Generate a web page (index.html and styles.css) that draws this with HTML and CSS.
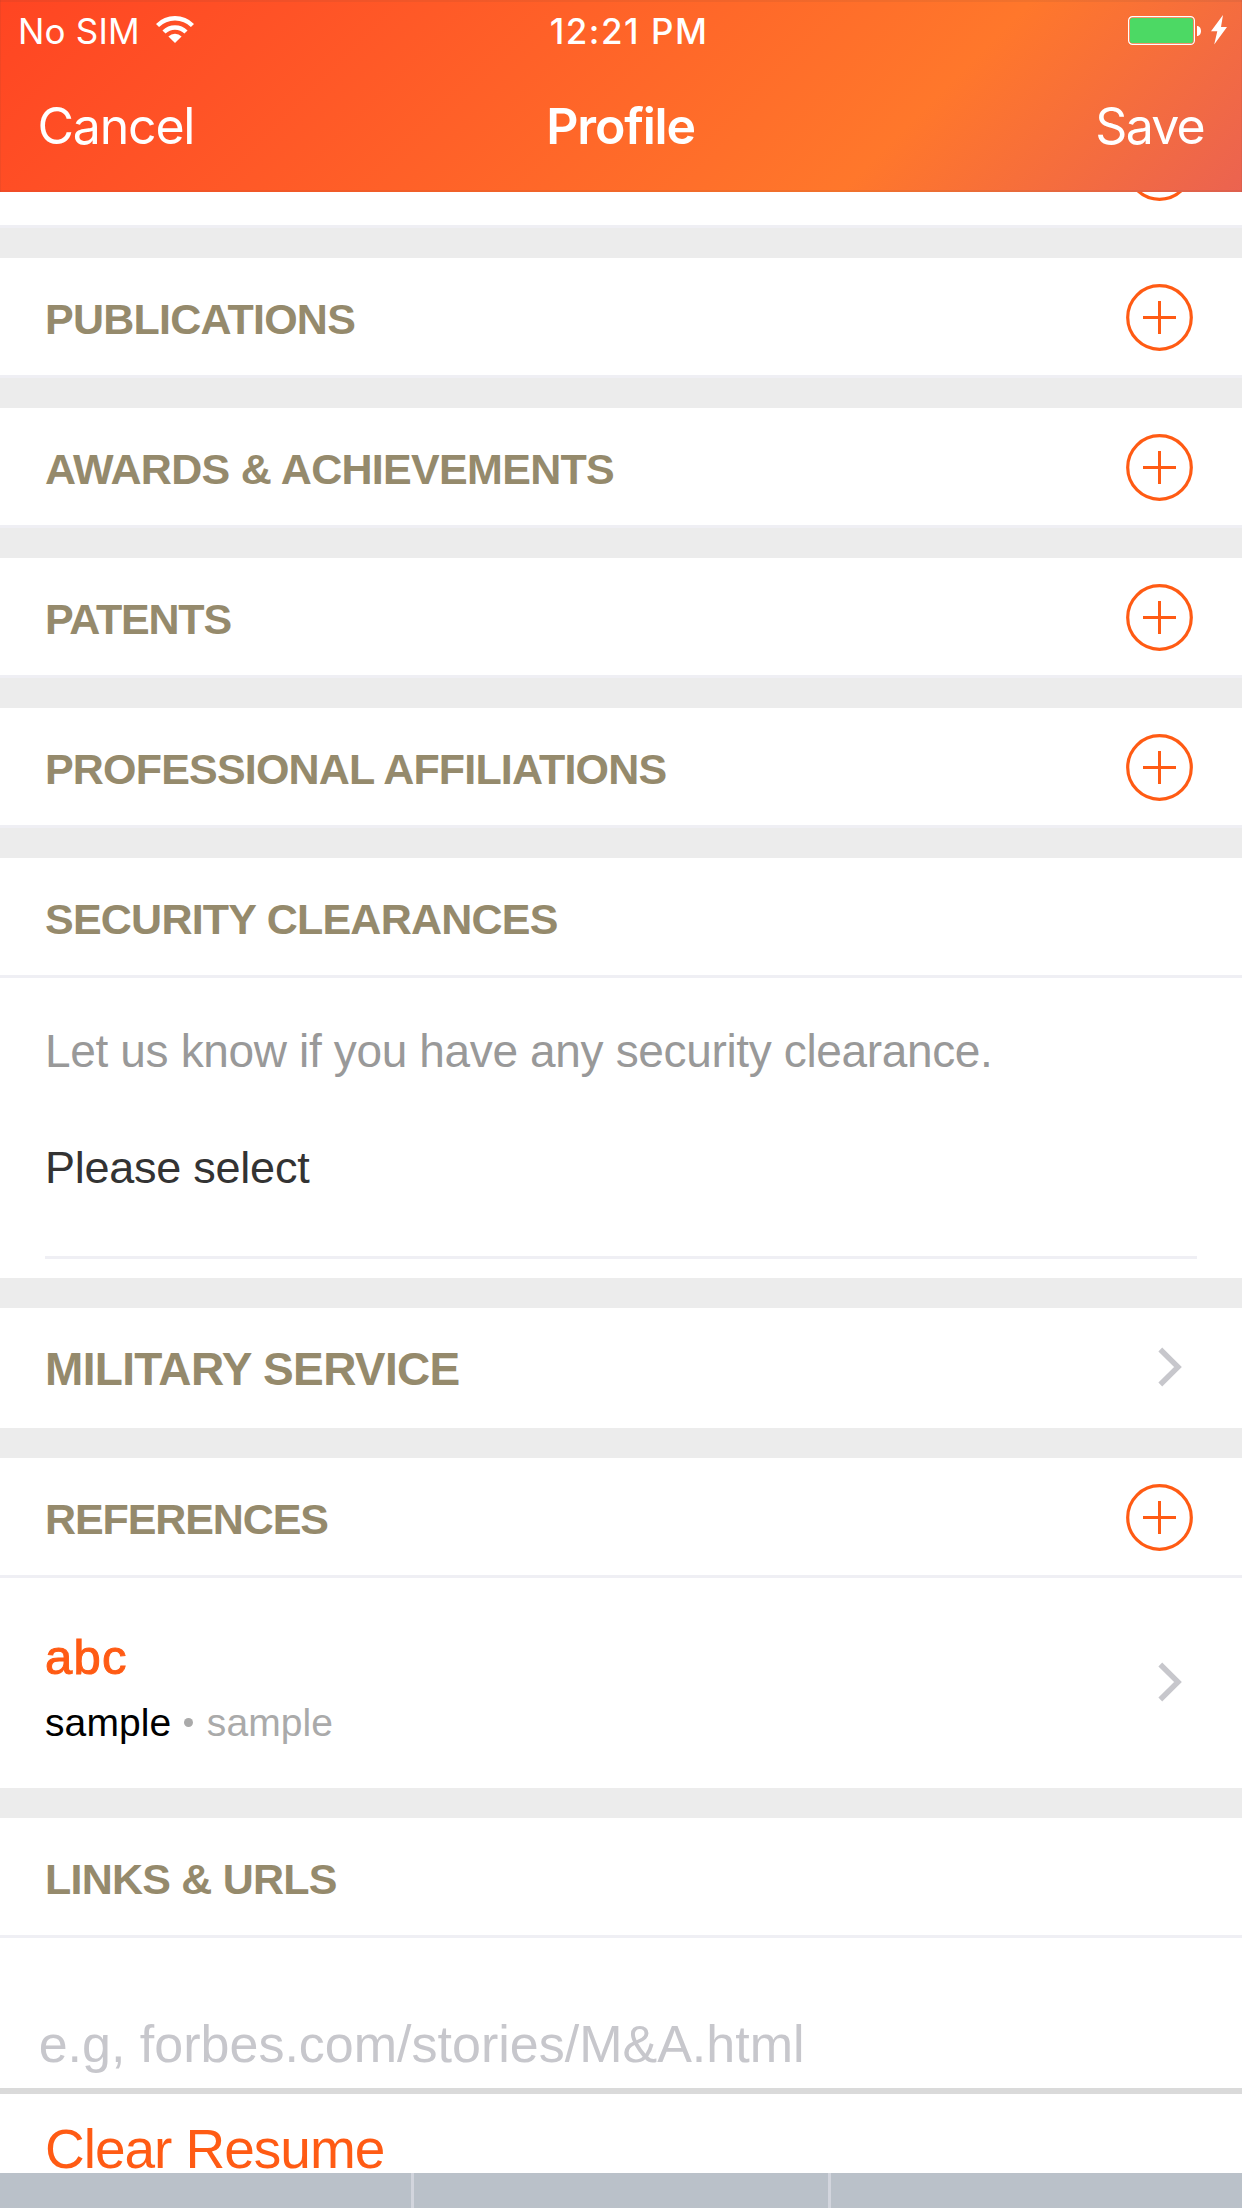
FILE: index.html
```html
<!DOCTYPE html>
<html lang="en">
<head>
<meta charset="utf-8">
<title>Profile</title>
<link rel="stylesheet" href="styles.css">
</head>
<body>
<svg class="defs" aria-hidden="true">
  <symbol id="plus" viewBox="0 0 67 67">
    <circle cx="33.5" cy="33.5" r="31.8" fill="none" stroke="currentColor" stroke-width="3.2"/>
    <path d="M17 33.5H50M33.5 17V50" fill="none" stroke="currentColor" stroke-width="3"/>
  </symbol>
  <symbol id="chevron" viewBox="0 0 24 40">
    <path d="M2.3 2.5L20 20L2.3 37.5" fill="none" stroke="currentColor" stroke-width="5.4"/>
  </symbol>
</svg>
<div class="screen">
  <header class="header">
    <div class="status">
      <div class="carrier">
        <span>No SIM</span>
        <svg class="wifi" viewBox="0 0 38 28" fill="none" stroke="#fff">
          <path d="M1.5 10.5A24.75 24.75 0 0 1 36.5 10.5" stroke-width="4.4"/>
          <path d="M8 17A15.6 15.6 0 0 1 30 17" stroke-width="4.4"/>
          <path d="M19 28L12.4 21.4A9.3 9.3 0 0 1 25.6 21.4Z" fill="#fff" stroke="none"/>
        </svg>
      </div>
      <span class="clock">12:21 PM</span>
      <div class="power">
        <svg class="battery" viewBox="0 0 74 29">
          <rect x=".6" y=".6" width="65.8" height="27.8" rx="4" fill="none" stroke="#fff" stroke-width="1.2"/>
          <rect x="2" y="2" width="63" height="25" rx="2.6" fill="#4cd964"/>
          <path d="M69 10C74.3 10 74.3 20 69 20Z" fill="#fff"/>
        </svg>
        <svg class="bolt" viewBox="0 0 16 30"><path d="M12 0L0 16.3H6.3L3.2 29.5L16 12H10Z" fill="#fff"/></svg>
      </div>
    </div>
    <nav class="nav">
      <span class="cancel">Cancel</span>
      <span class="title">Profile</span>
      <span class="save">Save</span>
    </nav>
  </header>
  <main>
    <section class="row cut"><svg class="plus"><use href="#plus"/></svg></section>
    <section class="row"><h2>PUBLICATIONS</h2><svg class="plus"><use href="#plus"/></svg></section>
    <section class="row"><h2 class="awards">AWARDS &amp; ACHIEVEMENTS</h2><svg class="plus"><use href="#plus"/></svg></section>
    <section class="row"><h2 class="patents">PATENTS</h2><svg class="plus"><use href="#plus"/></svg></section>
    <section class="row"><h2 class="affiliations">PROFESSIONAL AFFILIATIONS</h2><svg class="plus"><use href="#plus"/></svg></section>
    <section class="group">
      <div class="row head"><h2>SECURITY CLEARANCES</h2></div>
      <div class="clearance">
        <p class="hint">Let us know if you have any security clearance.</p>
        <p class="select">Please select</p>
      </div>
    </section>
    <section class="military"><h2>MILITARY SERVICE</h2><svg class="chevron"><use href="#chevron"/></svg></section>
    <section class="group">
      <div class="row head"><h2 class="references">REFERENCES</h2><svg class="plus"><use href="#plus"/></svg></div>
      <div class="reference">
        <div class="person">
          <p class="name">abc</p>
          <p class="detail"><span>sample</span><i class="dot"></i><span class="muted">sample</span></p>
        </div>
        <svg class="chevron"><use href="#chevron"/></svg>
      </div>
    </section>
    <section class="links">
      <div class="row head"><h2>LINKS &amp; URLS</h2></div>
      <p class="url">e.g, forbes.com/stories/M&amp;A.html</p>
    </section>
  </main>
  <div class="clear">Clear Resume</div>
  <div class="keyboard"><span></span><span></span><span></span></div>
</div>
</body>
</html>
```
FILE: styles.css
```css
* { box-sizing: border-box; }
body, h2, p { margin: 0; }
body { background: #fff; font-family: "Liberation Sans", Arial, sans-serif; }
svg { display: block; flex: none; }
.defs { width: 0; height: 0; position: absolute; }
.screen { width: 1242px; height: 2208px; overflow: hidden; background: #fff; display: flex; flex-direction: column; white-space: nowrap; }

.header {
  height: 192px; flex: none; color: #fff; font-family: Inter, sans-serif;
  background: linear-gradient(135deg, #ff4522 0%, #ff5226 20%, #ff772b 72%, #eb6350 100%);
  box-shadow: inset 0 2px rgba(80, 60, 60, .08), inset 0 -2px rgba(80, 60, 60, .08), inset 1px 0 rgba(80, 60, 60, .08), inset -1px 0 rgba(80, 60, 60, .08);
}
.status { height: 62px; display: grid; grid-template-columns: 549.7px 1fr auto; align-items: center; font-size: 35px; line-height: 42px; padding: 0 15px 0 0; }
.carrier { display: flex; align-items: center; gap: 16px; padding-left: 18px; letter-spacing: .19px; }
.wifi { width: 38px; height: 28px; margin-top: -4px; }
.clock { font-weight: 500; letter-spacing: 1.53px; }
.power { display: flex; align-items: center; gap: 9px; }
.battery { width: 74px; height: 29px; margin-top: -1px; }
.bolt { width: 16px; height: 30px; margin-top: -2px; }
.nav { height: 128px; display: grid; grid-template-columns: 508.8px 1fr auto; align-items: center; font-size: 50px; line-height: 60px; padding: 0 38px 0 37.5px; }
.cancel { letter-spacing: -1.2px; }
.title { font-weight: 600; letter-spacing: -1.2px; }
.save { letter-spacing: -1.75px; }

.row { height: 150px; flex: none; display: flex; align-items: center; justify-content: space-between; padding: 3px 49px 3px 45px; border-bottom: 30px solid #ececec; box-shadow: inset 0 -3px #efeff4; }
.row h2 { padding-top: 2px; }
h2 { font-size: 43px; line-height: 50px; font-weight: 700; color: #958a6c; letter-spacing: -.77px; }
.awards { letter-spacing: -.7px; }
.patents { letter-spacing: -1.2px; }
.affiliations { letter-spacing: -.82px; }
.references { letter-spacing: -1.1px; }
.plus { width: 67px; height: 67px; color: #ff5b14; margin-top: -1px; }
.cut { height: 66px; align-items: flex-start; justify-content: flex-end; padding-top: 0; overflow: hidden; }
.cut .plus { margin-top: -58px; }
.head { height: 120px; padding-bottom: 0; border-bottom: 3px solid #efeff4; box-shadow: none; }
.group { border-bottom: 30px solid #ececec; }
.clearance { height: 300px; padding: 43px 45px 19px; display: flex; flex-direction: column; }
.hint { font-size: 46px; line-height: 60px; letter-spacing: -.35px; color: #999; }
.select { flex: 1; margin-top: 57px; font-size: 45px; line-height: 60px; letter-spacing: -.25px; color: #333; border-bottom: 3px solid #efeff4; }
.military { height: 150px; padding: 0 60px 0 45px; display: flex; align-items: center; justify-content: space-between; border-bottom: 30px solid #ececec; }
.military h2 { font-size: 46px; letter-spacing: -.66px; padding-top: 2px; }
.chevron { width: 24px; height: 40px; color: #c7c7cc; margin-top: -3px; }
.reference { height: 210px; padding: 0 60px 0 45px; display: flex; align-items: center; justify-content: space-between; }
.person { padding-top: 5px; }
.name { font-size: 49px; line-height: 60px; letter-spacing: 1.3px; color: #ff5b14; -webkit-text-stroke: 1px #ff5b14; }
.detail { margin-top: 14px; font-size: 39px; line-height: 44px; letter-spacing: .1px; color: #000; display: flex; align-items: center; }
.dot { width: 9px; height: 9px; border-radius: 50%; background: #aaa; margin: 0 13.5px 0 13px; }
.muted { color: #aaa; }
.links { height: 276px; border-bottom: 6px solid #dadada; }
.url { padding: 76px 0 0 38.7px; font-size: 52px; line-height: 60px; color: #c7c7cc; }
.clear { height: 79px; flex: none; padding: 31px 0 0 45px; font-size: 55px; line-height: 48px; letter-spacing: -1.02px; color: #ff5b14; }
.keyboard { height: 35px; display: grid; grid-template-columns: 411px 414px 411px; gap: 3px; background: #d2d5dd; }
.keyboard span { background: #bac1c9; }
```
